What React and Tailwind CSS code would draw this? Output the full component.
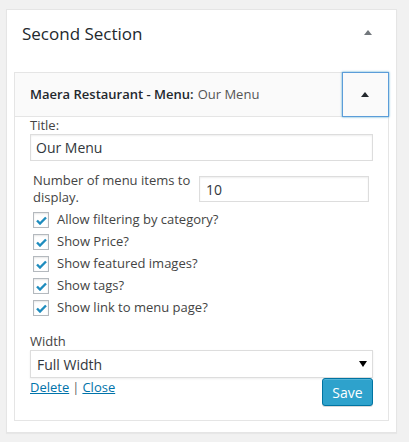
import React from 'react';

const font = { fontFamily: '"Open Sans", "Noto Sans", sans-serif' };

function Arrow({ className }) {
  return (
    <svg width="8" height="5" viewBox="0 0 8 5" className={className}>
      <path d="M0 5 L4 0 L8 5 Z" fill="currentColor" />
    </svg>
  );
}

function Check({ label }) {
  return (
    <label className="flex items-center h-[22px]">
      <span className="w-4 h-4 border border-[#b4b9be] bg-white shadow-[inset_0_1px_2px_rgba(0,0,0,0.1)] flex items-center justify-center">
        <svg width="11" height="9" viewBox="0 0 11 9">
          <path d="M1 4.5 L4 7.5 L10 1.5" fill="none" stroke="#1e8cbe" strokeWidth="2.4" />
        </svg>
      </span>
      <span className="ml-2 text-[13px] text-[#444]">{label}</span>
    </label>
  );
}

export default function App() {
  const checks = [
    'Allow filtering by category?',
    'Show Price?',
    'Show featured images?',
    'Show tags?',
    'Show link to menu page?',
  ];

  return (
    <div className="w-[409px] h-[442px] bg-[#f1f1f1] pt-[9px] pl-[6px]" style={font}>
      <div className="w-[391px] h-[424px] bg-white border border-[#e5e5e5] shadow-[0_1px_1px_rgba(0,0,0,0.04)]">
        <div className="flex items-center justify-between h-[48px] pl-[15px] pr-[24px] pb-[2px]">
          <h2 className="text-[17px] font-medium text-[#23282d] leading-none">Second Section</h2>
          <Arrow className="text-[#72777c] mb-[2px]" />
        </div>
        <div className="ml-[7px] mt-[14px] w-[375px]">
          <div className="flex h-[45px] bg-[#fafafa] border border-[#e5e5e5]">
            <div className="flex-1 flex items-center pl-[15px] text-[13px] text-[#23282d]">
              <span className="font-semibold">Maera Restaurant - Menu:</span>
              <span className="ml-1 text-[#555]">Our Menu</span>
            </div>
            <div className="w-[47px] -my-px -mr-px border border-[#5b9dd9] shadow-[0_0_2px_rgba(30,140,190,0.8)] flex items-center justify-center pr-[2px]">
              <Arrow className="text-[#23282d]" />
            </div>
          </div>
          <div className="border border-t-0 border-[#e5e5e5] pl-[15px] pr-[15px] pb-[14px] text-[#444]">
            <div className="text-[13px] leading-[16px]">Title:</div>
            <div className="mt-[1px] h-[27px] border border-[#ddd] shadow-[inset_0_1px_2px_rgba(0,0,0,0.07)] flex items-center px-[5px] text-[14px] text-[#32373c]">
              Our Menu
            </div>
            <div className="mt-[11px] flex items-center pl-[3px] pr-[4px]">
              <div className="w-[165px] text-[13px] leading-[17px]">Number of menu items to display.</div>
              <div className="ml-auto w-[170px] h-[26px] border border-[#ddd] shadow-[inset_0_1px_2px_rgba(0,0,0,0.07)] flex items-center px-[6px] text-[14px] text-[#32373c]">
                10
              </div>
            </div>
            <div className="mt-[3px] pl-[3px]">
              {checks.map((c) => (
                <Check key={c} label={c} />
              ))}
            </div>
            <div className="mt-[14px] text-[13px] leading-[17px]">Width</div>
            <div className="h-[28px] border border-[#ddd] shadow-[0_1px_2px_rgba(0,0,0,0.07)] flex items-center justify-between pl-[6px] pr-[5px] text-[14px] text-[#32373c]">
              <span>Full Width</span>
              <svg width="8" height="6" viewBox="0 0 8 6">
                <path d="M0 0 L8 0 L4 6 Z" fill="#000" />
              </svg>
            </div>
            <div className="flex justify-between">
              <div className="text-[13px] leading-[17px] pt-[1px]">
                <a className="text-[#0073aa] underline">Delete</a>
                <span className="mx-[3px] text-[#666]">|</span>
                <a className="text-[#0073aa] underline">Close</a>
              </div>
              <button className="w-[51px] h-[28px] rounded-[3px] bg-[#2ea2cc] border border-[#0074a2] shadow-[inset_0_1px_0_rgba(120,200,230,0.5),0_1px_0_rgba(0,0,0,0.15)] text-white text-[14px]">
                Save
              </button>
            </div>
          </div>
        </div>
      </div>
    </div>
  );
}
